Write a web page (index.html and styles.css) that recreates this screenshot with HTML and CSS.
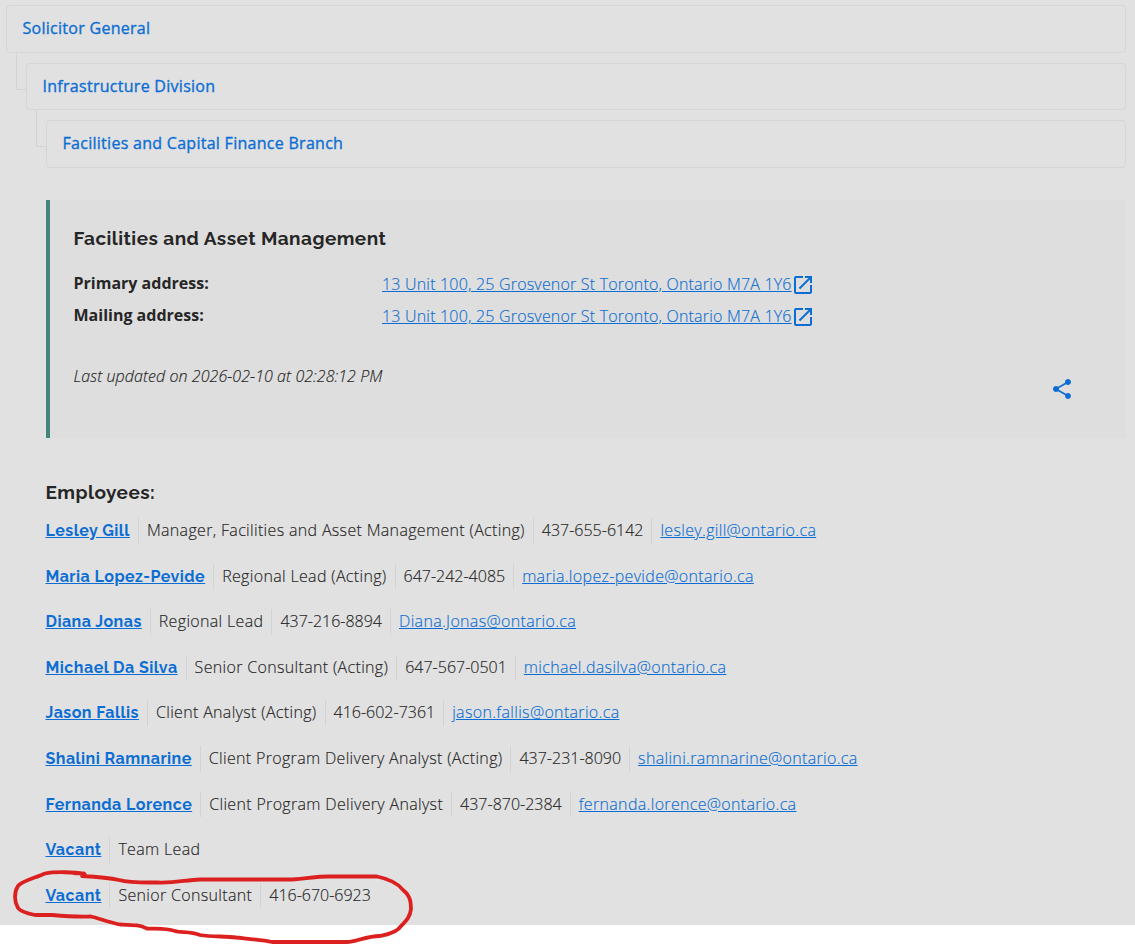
FILE: index.html
```
<!DOCTYPE html>
<html lang="en">
<head>
    <meta charset="UTF-8">
    <title>Facilities and Asset Management</title>
    <link rel="stylesheet" href="styles.css">
</head>
<body>
<div class="page">
    <nav class="tree">
        <a class="level" href="#">Solicitor General</a>
        <a class="level level-2" href="#">Infrastructure Division</a>
        <a class="level level-3" href="#">Facilities and Capital Finance Branch</a>
    </nav>

    <section class="org">
        <h2>Facilities and Asset Management</h2>
        <dl class="address">
            <dt>Primary address:</dt>
            <dd><a href="#">13 Unit 100, 25 Grosvenor St Toronto, Ontario M7A 1Y6</a><svg class="icon-open" viewBox="0 0 24 24"><path d="M19 19H5V5h7V3H5a2 2 0 0 0-2 2v14a2 2 0 0 0 2 2h14c1.1 0 2-.9 2-2v-7h-2v7zM14 3v2h3.590l-9.830 9.830 1.410 1.410L19 6.410V10h2V3h-7z"/></svg></dd>
            <dt>Mailing address:</dt>
            <dd><a href="#">13 Unit 100, 25 Grosvenor St Toronto, Ontario M7A 1Y6</a><svg class="icon-open" viewBox="0 0 24 24"><path d="M19 19H5V5h7V3H5a2 2 0 0 0-2 2v14a2 2 0 0 0 2 2h14c1.1 0 2-.9 2-2v-7h-2v7zM14 3v2h3.590l-9.830 9.830 1.410 1.410L19 6.410V10h2V3h-7z"/></svg></dd>
        </dl>
        <p class="updated">Last updated on 2026-02-10 at 02:28:12 PM</p>
        <div class="share">
            <svg class="icon-share" viewBox="0 0 24 24"><path d="M18 16.080c-.76 0-1.440.3-1.960.77L8.910 12.700c.05-.23.09-.46.09-.7s-.04-.47-.09-.7l7.050-4.110c.54.5 1.250.81 2.040.81 1.660 0 3-1.340 3-3s-1.340-3-3-3-3 1.340-3 3c0 .24.04.47.09.7L8.040 9.810C7.500 9.310 6.790 9 6 9c-1.660 0-3 1.340-3 3s1.340 3 3 3c.79 0 1.500-.31 2.040-.81l7.120 4.160c-.05.21-.08.43-.08.65 0 1.610 1.310 2.920 2.920 2.920s2.920-1.310 2.920-2.920-1.310-2.920-2.920-2.920z"/></svg>
        </div>
    </section>

    <section class="employees">
        <h3>Employees:</h3>
        <ul>
            <li><a class="name" href="#">Lesley Gill</a><span>Manager, Facilities and Asset Management (Acting)</span><span class="phone">437-655-6142</span><span><a href="#">lesley.gill@ontario.ca</a></span></li>
            <li><a class="name" href="#">Maria Lopez-Pevide</a><span>Regional Lead (Acting)</span><span class="phone">647-242-4085</span><span><a href="#">maria.lopez-pevide@ontario.ca</a></span></li>
            <li><a class="name" href="#">Diana Jonas</a><span>Regional Lead</span><span class="phone">437-216-8894</span><span><a href="#">Diana.Jonas@ontario.ca</a></span></li>
            <li><a class="name" href="#">Michael Da Silva</a><span>Senior Consultant (Acting)</span><span class="phone">647-567-0501</span><span><a href="#">michael.dasilva@ontario.ca</a></span></li>
            <li><a class="name" href="#">Jason Fallis</a><span>Client Analyst (Acting)</span><span class="phone">416-602-7361</span><span><a href="#">jason.fallis@ontario.ca</a></span></li>
            <li><a class="name" href="#">Shalini Ramnarine</a><span>Client Program Delivery Analyst (Acting)</span><span class="phone">437-231-8090</span><span><a href="#">shalini.ramnarine@ontario.ca</a></span></li>
            <li><a class="name" href="#">Fernanda Lorence</a><span>Client Program Delivery Analyst</span><span class="phone">437-870-2384</span><span><a href="#">fernanda.lorence@ontario.ca</a></span></li>
            <li><a class="name" href="#">Vacant</a><span>Team Lead</span></li>
            <li><a class="name" href="#">Vacant</a><span>Senior Consultant</span><span class="phone">416-670-6923</span></li>
        </ul>
    </section>
</div>

<!-- hand drawn circle round the last row -->
<svg class="marker" viewBox="0 0 420 85">
    <path d="M73 13L84 13.500C86 15 84 16 82 16C100 17 110 18 119 20C130 23 140 22.500 158 22.500C177 23 185 20 200 19.500L292 19.500C310 18 318 16.500 328 16.500L377 16.500C389 19 398 23 403 30C411 36 411 44 411 49C410 58 405 62 401 66C397 73 385 75 380 76C366 76 356 82 347 82L272 82C262 80 250 79 236 77.500C226 76 212 77 200 75C190 71 181 73 175 71C165 68 158 69 147 68.500C140 65 135 65 120 64.500C108 62 98 58 91 56.500C80 57 68 56.500 52 55H35C25 53 20 51 18 48C14 41 14 32 18 26C22 21 35 18 45 13.500C55 11.500 75 12 84 14"/>
</svg>
</body>
</html>
```
FILE: styles.css
```
*{
    margin: 0;
    padding: 0;
    box-sizing: border-box;
}
body{
    position: relative;
    height: 945px;
    background: #fff;
    color: #262626;
    font: 300 16px/25.6px "Open Sans", sans-serif;
    letter-spacing: .33px;
    -webkit-text-stroke: .15px;
}
a{
    color: #0c6ed4;
}
.page{
    height: 925px;
    padding: 5px 9px 0 6px;
    background: #e1e1e1;
}
.level{
    position: relative;
    display: block;
    height: 48px;
    padding: 10px 15.5px;
    border: 1px solid #d6d6d6;
    border-radius: 4px;
    font-weight: 400;
    letter-spacing: .28px;
    text-decoration: none;
    -webkit-text-stroke: .35px;
}
.level-2{
    height: 47px;
    margin: 10px 0 0 20px;
}
.level-3{
    margin: 10px 0 0 40px;
}
/* elbow line to the parent level */
.level-2::before,
.level-3::before{
    content: "";
    position: absolute;
    left: -11px;
    top: -11px;
    width: 10px;
    height: 36px;
    border-left: 1px solid #d3d3d3;
    border-bottom: 1px solid #d3d3d3;
}
.org{
    height: 238px;
    margin: 32px 0 0 40px;
    padding: 24px 52px 0 23.5px;
    border-left: 4px solid #438579;
    background: #dedede;
}
h2,h3{
    font: 700 19px/28px Raleway, Lato, sans-serif;
    letter-spacing: .45px;
    -webkit-text-stroke: 0;
}
.address{
    display: grid;
    grid-template-columns: 308.5px 1fr;
    grid-auto-rows: 32px;
    margin-top: 19px;
}
.address dt{
    font-weight: 700;
    letter-spacing: 0;
    -webkit-text-stroke: 0;
}
.address dd{
    display: flex;
    padding-top: 1px;
    letter-spacing: .19px;
}
.icon-open{
    width: 24px;
    height: 24px;
    margin: 1px 0 0 -1px;
    fill: #0c6ed4;
}
.updated{
    margin-top: 29px;
    font-style: italic;
    letter-spacing: .06px;
}
.share{
    display: flex;
    justify-content: flex-end;
    margin-top: -13px;
}
.icon-share{
    width: 24px;
    height: 24px;
    fill: #0c6ed4;
}
.employees{
    margin: 40px 0 0 39.5px;
}
.employees ul{
    margin-top: 12px;
    list-style: none;
}
.employees li{
    display: flex;
    height: 25.6px;
    margin-bottom: 20px;
}
.employees span{
    margin-left: 8px;
    padding-left: 8px;
    border-left: 1px solid #d3d3d3;
}
.employees .phone{
    letter-spacing: 0;
}
.name{
    font-family: Raleway, Lato, sans-serif;
    font-weight: 700;
    letter-spacing: .47px;
    -webkit-text-stroke: 0;
}
.marker{
    position: absolute;
    left: 0;
    top: 860px;
    width: 420px;
    height: 85px;
    fill: none;
    stroke: #dc2020;
    stroke-width: 3.8;
    stroke-linecap: round;
    stroke-linejoin: round;
}
```
